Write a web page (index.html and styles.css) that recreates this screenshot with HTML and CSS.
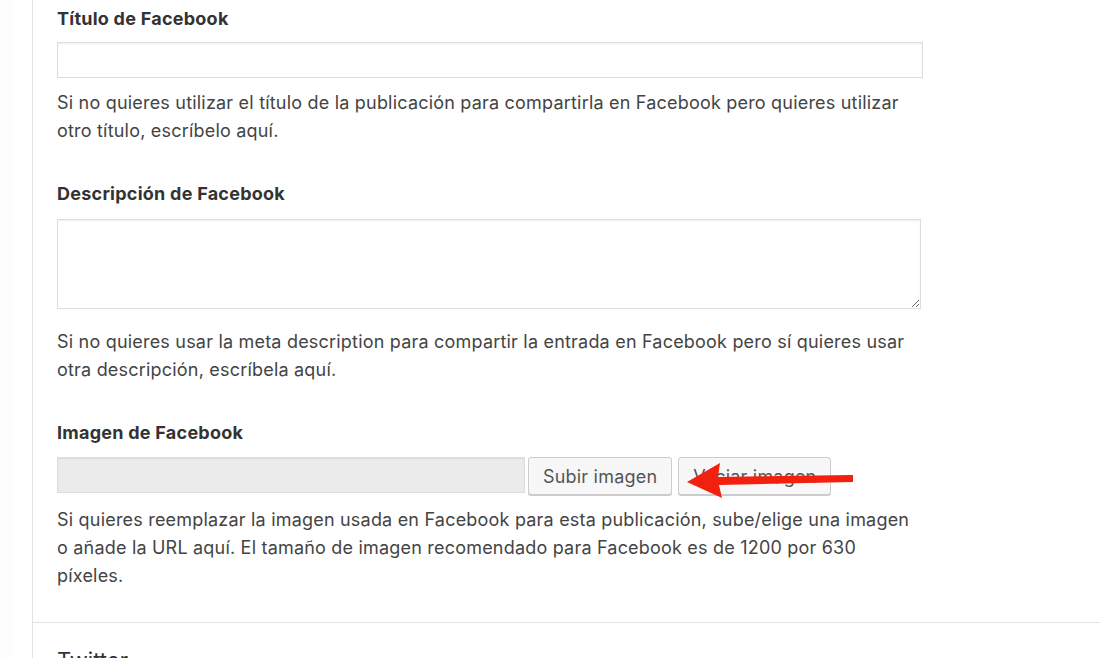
FILE: index.html
```html
<!DOCTYPE html>
<html lang="es">
<head>
    <meta charset="UTF-8">
    <title>Facebook</title>
    <link rel="stylesheet" href="styles.css">
</head>
<body>

    <div class="pagina">
        <div class="lateral"></div>
        <div class="contenido">
            <div class="campos">
                <div class="campo">
                    <label class="etiqueta">Título de Facebook</label>
                    <input type="text" class="texto">
                    <p class="ayuda">Si no quieres utilizar el título de la publicación para compartirla en Facebook pero quieres utilizar otro título, escríbelo aquí.</p>
                </div>

                <div class="campo">
                    <label class="etiqueta">Descripción de Facebook</label>
                    <textarea class="area"></textarea>
                    <p class="ayuda tras-area">Si no quieres usar la meta description para compartir la entrada en Facebook pero sí quieres usar otra descripción, escríbela aquí.</p>
                </div>

                <div class="campo ultimo">
                    <label class="etiqueta">Imagen de Facebook</label>
                    <div class="fila-imagen">
                        <input type="text" class="texto url" readonly>
                        <button class="boton">Subir imagen</button>
                        <button class="boton">Vaciar imagen</button>
                        <svg class="flecha" width="180" height="44" viewBox="0 0 180 44">
                            <polygon points="2,25 35,6 33,20 168,18 168,25 34,28 37,41" fill="#f2200f"/>
                        </svg>
                    </div>
                    <p class="ayuda">Si quieres reemplazar la imagen usada en Facebook para esta publicación, sube/elige una imagen o añade la URL aquí. El tamaño de imagen recomendado para Facebook es de 1200 por 630 píxeles.</p>
                </div>
            </div>

            <div class="seccion">
                <h2>Twitter</h2>
            </div>
        </div>
    </div>

</body>
</html>
```

FILE: styles.css
```css
body {
    margin: 0;
    background-color: #fff;
    font-family: Inter, "Noto Sans", sans-serif;
    color: #444;
    overflow: hidden;
}

.pagina {
    display: flex;
    height: 658px;
}

.lateral {
    width: 19px;
    border-left: 13px solid #fdfdfd;
    border-right: 1px solid #e2e2e2;
    background-color: #fff;
}

.contenido {
    flex: 1;
}

.campos {
    padding: 7px 0 0 24px;
    width: 866px;
}

.campo {
    margin-bottom: 37px;
}

.campo.ultimo {
    margin-bottom: 0;
    padding-bottom: 32px;
}

.etiqueta {
    display: block;
    font-size: 18px;
    font-weight: 700;
    letter-spacing: 0.25px;
    color: #333;
    line-height: 24px;
    margin-bottom: 11px;
}

.texto {
    display: block;
    width: 866px;
    height: 36px;
    box-sizing: border-box;
    border: 1px solid #ddd;
    box-shadow: inset 0 1px 2px rgba(0, 0, 0, 0.07);
    margin: 0;
}

.area {
    display: block;
    width: 864px;
    height: 90px;
    box-sizing: border-box;
    border: 1px solid #ddd;
    box-shadow: inset 0 1px 2px rgba(0, 0, 0, 0.07);
    margin: 13px 0 0;
}

.ayuda {
    font-size: 18px;
    letter-spacing: 0.2px;
    line-height: 28px;
    margin: 11px 0 0;
    max-width: 860px;
}

.ayuda.tras-area {
    margin-top: 19px;
}

.fila-imagen {
    display: flex;
    align-items: flex-start;
    gap: 3px;
    position: relative;
    margin-top: 12px;
    margin-bottom: 2px;
}

.texto.url {
    width: 468px;
    background-color: #ebebeb;
}

.boton {
    height: 38px;
    padding: 0 14px;
    font-family: Inter, "Noto Sans", sans-serif;
    font-size: 18px;
    letter-spacing: 0.2px;
    color: #555;
    background-color: #f7f7f7;
    border: 1px solid #ccc;
    border-radius: 3px;
    box-shadow: 0 1px 0 #ccc;
}

.boton + .boton {
    margin-left: 3px;
}

.flecha {
    position: absolute;
    left: 628px;
    top: 0;
}

.seccion {
    border-top: 1px solid #e2e2e2;
    padding: 24px 0 0 24px;
}

.seccion h2 {
    margin: 0;
    font-size: 22px;
    font-weight: 400;
    color: #333;
}
```
